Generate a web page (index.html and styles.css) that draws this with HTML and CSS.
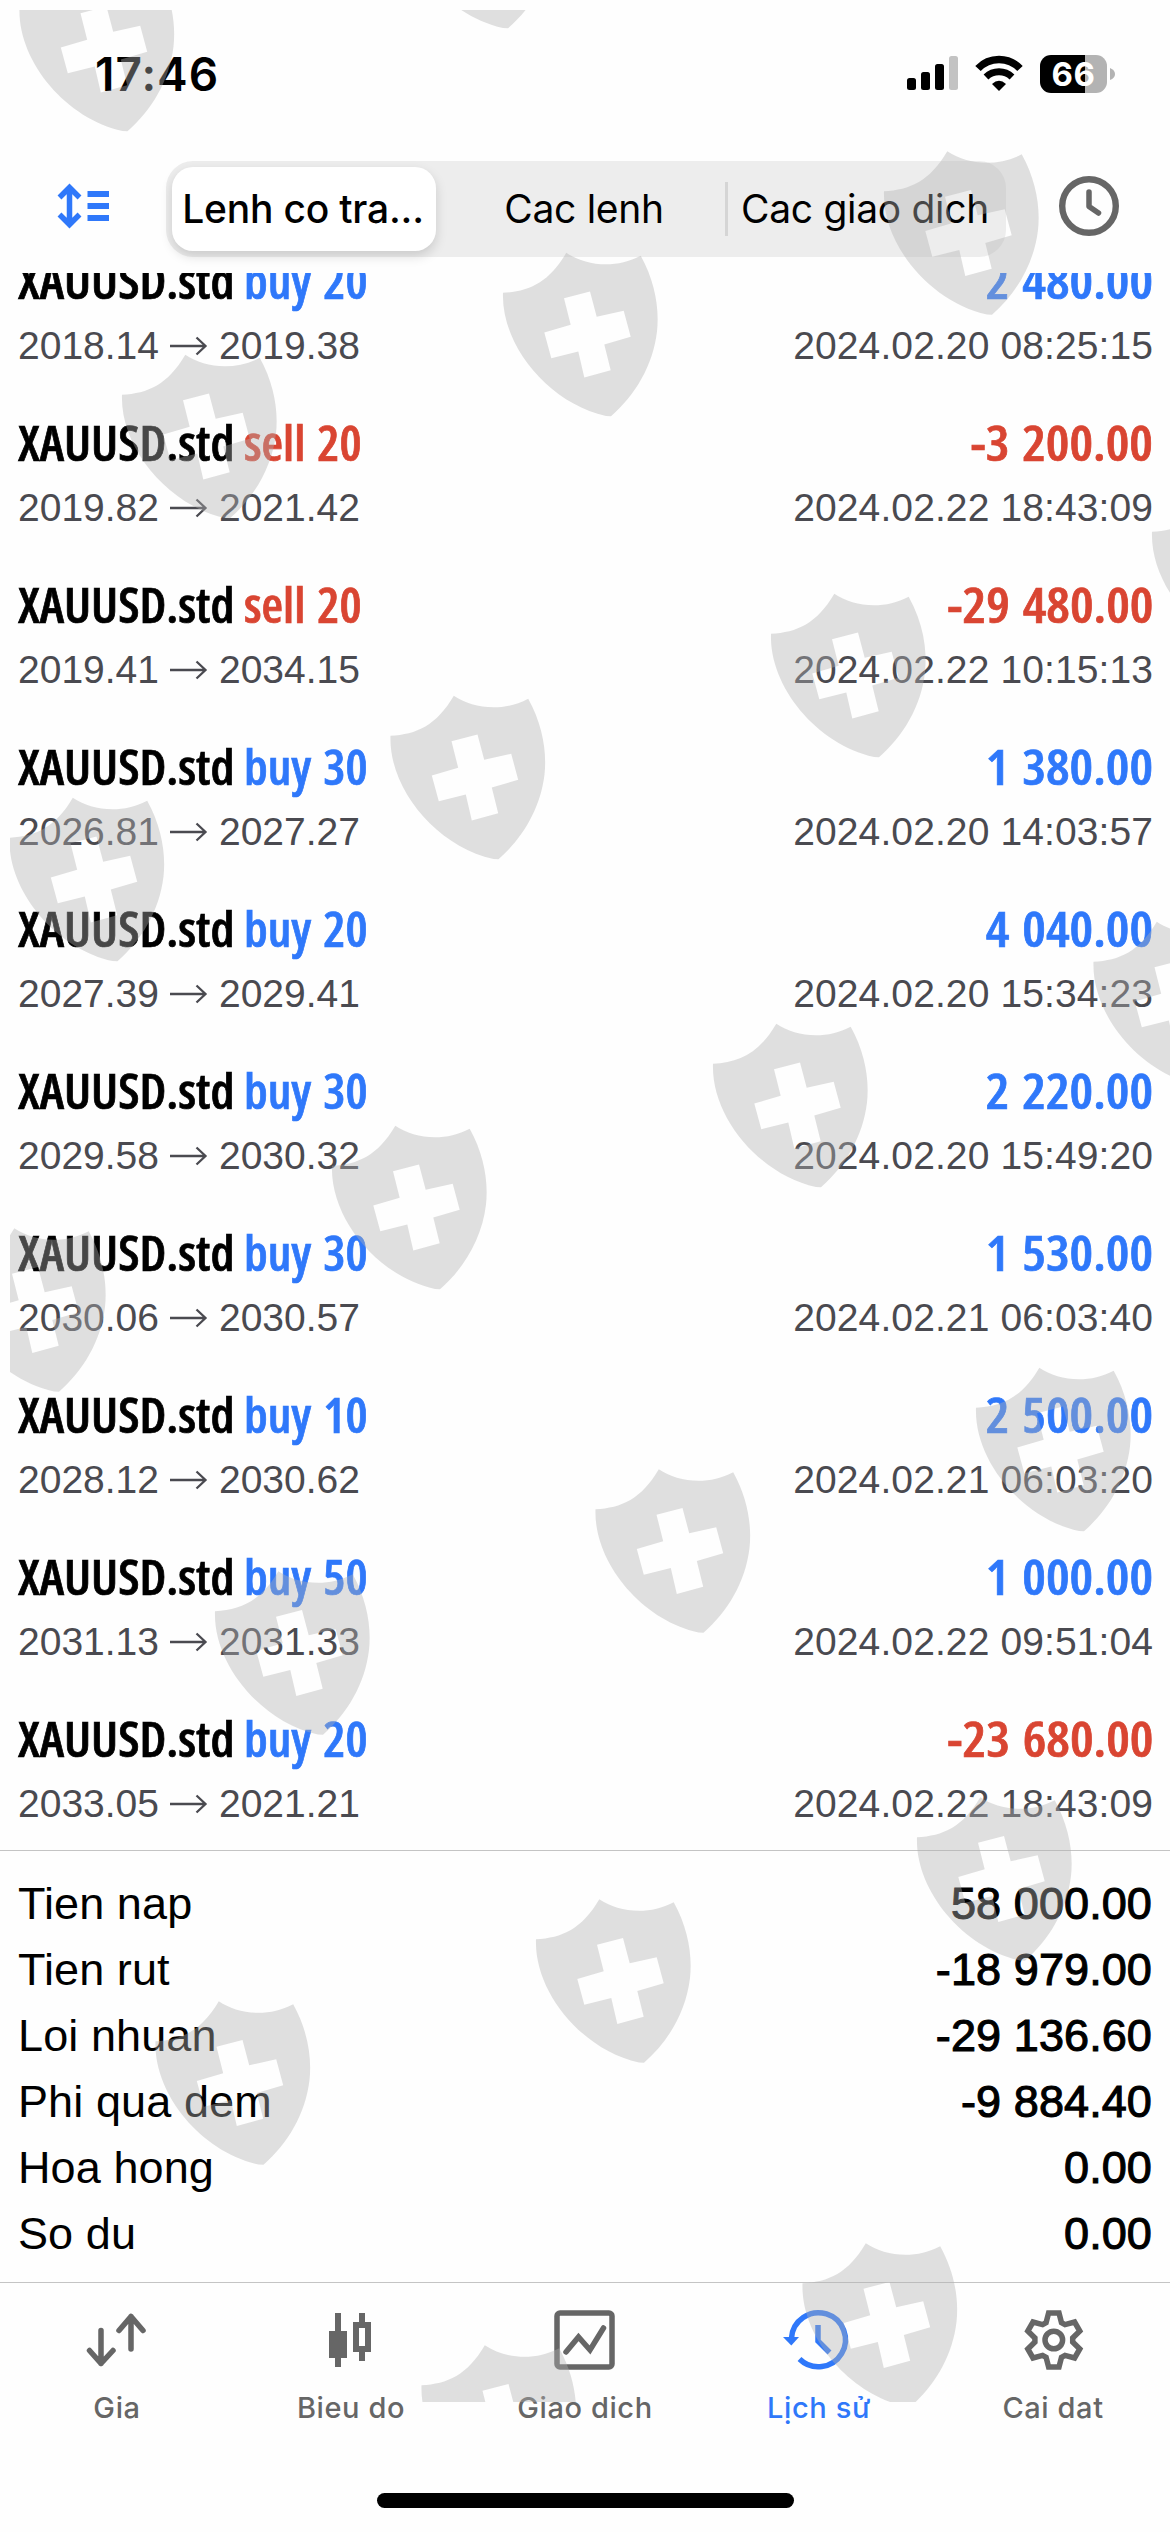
FILE: index.html
```html
<!DOCTYPE html>
<html lang="vi">
<head>
<meta charset="utf-8">
<title>Lịch sử</title>
<link rel="stylesheet" href="styles.css">
</head>
<body>
<div class="screen">
  <header class="status">
    <div class="time">17:46</div>
    <div class="indicators">
      <svg class="signal" viewBox="0 0 51 36"><rect y="23" width="9" height="12" rx="2.5"/><rect x="14" y="17" width="9" height="18" rx="2.5"/><rect x="28" y="9" width="9" height="26" rx="2.5"/><rect x="42" y="1" width="9" height="34" rx="2.5" fill="#c3c3c3"/></svg>
      <svg class="wifi" viewBox="0 0 48 36"><g fill="none" stroke="#000"><path d="M3 13.5A29 29 0 0 1 45 13.5" stroke-width="7.5"/><path d="M11 22A19 19 0 0 1 37 22" stroke-width="7"/></g><path d="M17 29Q24 22.5 31 29L24 36Z"/></svg>
      <div class="battery"><div class="level">66</div><svg class="nub" viewBox="0 0 5 12"><path d="M0 0Q5 2 5 6Q5 10 0 12Z" fill="#b3b3b3"/></svg></div>
    </div>
  </header>

  <nav class="toolbar">
    <svg class="sort" viewBox="0 0 52 46" fill="none" stroke="#2f78fa"><path d="M12.5 4V42M2.5 14.5L12.5 4.5L22.5 14.5M2.5 31.5L12.5 41.5L22.5 31.5" stroke-width="5.5"/><path d="M30.500 11H52M30.500 23H52M30.500 35H52" stroke-width="6"/></svg>
    <div class="segments">
      <div class="segment selected">Lenh co tra...</div>
      <div class="segment">Cac lenh</div>
      <div class="segment last">Cac giao dich</div>
    </div>
    <svg class="clock" viewBox="0 0 60 60" fill="none" stroke="#666"><circle cx="30" cy="30" r="26.800" stroke-width="6.400"/><path d="M30 16V30.500L39.500 37" stroke-width="5.500" stroke-linecap="round" stroke-linejoin="round"/></svg>
  </nav>

  <main class="deals">
    <article class="deal buy up"><div class="line"><span class="symbol">XAUUSD.std</span><span class="side">buy 20</span><span class="amount">2 480.00</span></div><div class="detail"><span>2018.14</span><svg class="arrow" viewBox="0 0 39 20"><path d="M1 10H36.500M27.500 1.500L36.500 10L27.500 18.500"/></svg><span>2019.38</span><time>2024.02.20 08:25:15</time></div></article>
    <article class="deal sell down"><div class="line"><span class="symbol">XAUUSD.std</span><span class="side">sell 20</span><span class="amount">-3 200.00</span></div><div class="detail"><span>2019.82</span><svg class="arrow" viewBox="0 0 39 20"><path d="M1 10H36.500M27.500 1.500L36.500 10L27.500 18.500"/></svg><span>2021.42</span><time>2024.02.22 18:43:09</time></div></article>
    <article class="deal sell down"><div class="line"><span class="symbol">XAUUSD.std</span><span class="side">sell 20</span><span class="amount">-29 480.00</span></div><div class="detail"><span>2019.41</span><svg class="arrow" viewBox="0 0 39 20"><path d="M1 10H36.500M27.500 1.500L36.500 10L27.500 18.500"/></svg><span>2034.15</span><time>2024.02.22 10:15:13</time></div></article>
    <article class="deal buy up"><div class="line"><span class="symbol">XAUUSD.std</span><span class="side">buy 30</span><span class="amount">1 380.00</span></div><div class="detail"><span>2026.81</span><svg class="arrow" viewBox="0 0 39 20"><path d="M1 10H36.500M27.500 1.500L36.500 10L27.500 18.500"/></svg><span>2027.27</span><time>2024.02.20 14:03:57</time></div></article>
    <article class="deal buy up"><div class="line"><span class="symbol">XAUUSD.std</span><span class="side">buy 20</span><span class="amount">4 040.00</span></div><div class="detail"><span>2027.39</span><svg class="arrow" viewBox="0 0 39 20"><path d="M1 10H36.500M27.500 1.500L36.500 10L27.500 18.500"/></svg><span>2029.41</span><time>2024.02.20 15:34:23</time></div></article>
    <article class="deal buy up"><div class="line"><span class="symbol">XAUUSD.std</span><span class="side">buy 30</span><span class="amount">2 220.00</span></div><div class="detail"><span>2029.58</span><svg class="arrow" viewBox="0 0 39 20"><path d="M1 10H36.500M27.500 1.500L36.500 10L27.500 18.500"/></svg><span>2030.32</span><time>2024.02.20 15:49:20</time></div></article>
    <article class="deal buy up"><div class="line"><span class="symbol">XAUUSD.std</span><span class="side">buy 30</span><span class="amount">1 530.00</span></div><div class="detail"><span>2030.06</span><svg class="arrow" viewBox="0 0 39 20"><path d="M1 10H36.500M27.500 1.500L36.500 10L27.500 18.500"/></svg><span>2030.57</span><time>2024.02.21 06:03:40</time></div></article>
    <article class="deal buy up"><div class="line"><span class="symbol">XAUUSD.std</span><span class="side">buy 10</span><span class="amount">2 500.00</span></div><div class="detail"><span>2028.12</span><svg class="arrow" viewBox="0 0 39 20"><path d="M1 10H36.500M27.500 1.500L36.500 10L27.500 18.500"/></svg><span>2030.62</span><time>2024.02.21 06:03:20</time></div></article>
    <article class="deal buy up"><div class="line"><span class="symbol">XAUUSD.std</span><span class="side">buy 50</span><span class="amount">1 000.00</span></div><div class="detail"><span>2031.13</span><svg class="arrow" viewBox="0 0 39 20"><path d="M1 10H36.500M27.500 1.500L36.500 10L27.500 18.500"/></svg><span>2031.33</span><time>2024.02.22 09:51:04</time></div></article>
    <article class="deal buy down"><div class="line"><span class="symbol">XAUUSD.std</span><span class="side">buy 20</span><span class="amount">-23 680.00</span></div><div class="detail"><span>2033.05</span><svg class="arrow" viewBox="0 0 39 20"><path d="M1 10H36.500M27.500 1.500L36.500 10L27.500 18.500"/></svg><span>2021.21</span><time>2024.02.22 18:43:09</time></div></article>
  </main>

  <section class="summary">
    <div class="total"><span>Tien nap</span><b>58 000.00</b></div>
    <div class="total"><span>Tien rut</span><b>-18 979.00</b></div>
    <div class="total"><span>Loi nhuan</span><b>-29 136.60</b></div>
    <div class="total"><span>Phi qua dem</span><b>-9 884.40</b></div>
    <div class="total"><span>Hoa hong</span><b>0.00</b></div>
    <div class="total"><span>So du</span><b>0.00</b></div>
  </section>

  <footer class="tabs">
    <div class="tab"><svg viewBox="0 0 60 60" fill="none" stroke="currentColor" stroke-width="5.500" stroke-linecap="round" stroke-linejoin="round"><path d="M14 20.500V53.500M2.500 40.500L14 53.500L26 40.500M44 39V6.500M32 20.500L44 6.500L56 20.500"/></svg><span>Gia</span></div>
    <div class="tab"><svg viewBox="0 0 60 60" fill="currentColor"><path d="M14 3H20V21H26V48H20V57H14V48H8V21H14ZM38 3H44V12H50V42H44V51H38V42H32V12H38ZM38 18V36H44V18Z" fill-rule="evenodd"/></svg><span>Bieu do</span></div>
    <div class="tab"><svg viewBox="0 0 60 60" fill="none" stroke="currentColor" stroke-width="5.500"><rect x="2" y="3" width="55" height="54" rx="3"/><path d="M11 42L23.500 27L35 40L48.500 18" stroke-linecap="round"/></svg><span>Giao dich</span></div>
    <div class="tab active"><svg viewBox="0 0 60 60" fill="none" stroke="currentColor" stroke-width="5.500"><path d="M2.500 28A27 27 0 1 1 10.500 49M29 15V31L40.500 42.500"/><path d="M-6 27H10L2.300 35.500Z" fill="currentColor" stroke="none"/></svg><span>Lịch sử</span></div>
    <div class="tab"><svg viewBox="-30.800 -30 60 60" fill="none" stroke="currentColor" stroke-width="5.500"><circle r="8.800"/><path d="M-7.700-17.400L-5.200-27H5.200L7.700-17.400L11.200-15.400L20.800-18L26-9L18.900-2V2L26 9L20.800 18L11.200 15.400L7.700 17.400L5.200 27H-5.200L-7.700 17.400L-11.200 15.400L-20.800 18L-26 9L-18.900 2V-2L-26-9L-20.800-18L-11.200-15.400Z"/></svg><span>Cai dat</span></div>
  </footer>
  <div class="home"></div>

  <svg class="watermark" viewBox="0 0 1170 2532">
    <defs>
      <path id="shield" fill-rule="evenodd" d="M16 59.300C42 58 62 49 79.300 19.300C98 32 128 36 153.700 22.300C168 48 172.500 75 170 98C166 132 148 162 124 182.700L119 182.500C62 170 14 112 16 59.300ZM77 64.700L83.700 91.300L57.300 99L64.300 124.700L91.300 118L97.300 144L123.700 136.700L117.300 111L143.700 103.300L136.700 77.300L109.700 83.300L103 58Z"/>
      <clipPath id="area"><rect x="10" y="10" width="1160" height="2392"/></clipPath>
    </defs>
    <g clip-path="url(#area)" fill="#b2b2b2" fill-opacity=".4">
      <use href="#shield" x="3.500" y="-51.500"/><use href="#shield" x="384" y="-154.500"/>
      <use href="#shield" x="868" y="132"/><use href="#shield" x="487" y="233.500"/><use href="#shield" x="106" y="335.500"/>
      <use href="#shield" x="1136" y="472.500"/><use href="#shield" x="755" y="574.500"/><use href="#shield" x="374.500" y="676.500"/><use href="#shield" x="-6.500" y="778.500"/>
      <use href="#shield" x="1077.500" y="902.500"/><use href="#shield" x="697" y="1004.500"/><use href="#shield" x="316" y="1106.500"/><use href="#shield" x="-65" y="1209"/>
      <use href="#shield" x="960" y="1348.500"/><use href="#shield" x="579.500" y="1450"/><use href="#shield" x="199" y="1552"/>
      <use href="#shield" x="901" y="1778"/><use href="#shield" x="520" y="1880"/><use href="#shield" x="139.500" y="1982"/>
      <use href="#shield" x="786.500" y="2224"/><use href="#shield" x="405.500" y="2326"/>
    </g>
  </svg>
</div>
</body>
</html>
```
FILE: styles.css
```css
* { box-sizing: border-box; }
body { margin: 0; background: #fefefe; color: #000; font-family: "Liberation Sans", Arial, sans-serif; }
svg { display: block; overflow: visible; flex: none; }
.screen { position: relative; width: 1170px; height: 2532px; display: flex; flex-direction: column; overflow: hidden; }

.status { height: 161px; flex: none; display: flex; justify-content: space-between; align-items: flex-start; padding: 55px 55px 0 95px; }
.time { font: 600 46px/39px Inter, sans-serif; letter-spacing: 1px; }
.indicators { display: flex; gap: 17px; }
.signal { width: 51px; height: 36px; }
.wifi { width: 48px; height: 36px; }
.battery { display: flex; align-items: center; gap: 3px; }
.level { width: 67px; height: 38px; border-radius: 11px; background: linear-gradient(90deg, #000 45px, #b3b3b3 45px); color: #fff; font: 700 33px/38px Inter, sans-serif; text-align: center; letter-spacing: .5px; }
.nub { width: 5px; height: 12px; }

.toolbar { height: 112px; flex: none; display: flex; align-items: flex-start; padding: 0 51px 0 57px; }
.sort { width: 52px; height: 46px; margin: 22px 57px 0 0; }
.segments { width: 840px; height: 96px; flex: none; display: grid; grid-template-columns: repeat(3, 1fr); align-items: center; background: #ededed; border-radius: 27px; padding-bottom: 1px; }
.segment { height: 54px; font: 400 39px/54px Inter, sans-serif; letter-spacing: -.3px; text-align: center; white-space: nowrap; padding-right: 4px; }
.segment.selected { height: 84px; line-height: 84px; margin: 0 10px 0 6px; padding-right: 2px; font-weight: 500; background: #fff; border-radius: 21px; box-shadow: 0 5px 12px rgba(0, 0, 0, .15); letter-spacing: -.2px; }
.segment.last { border-left: 3px solid #d5d5d5; margin-left: -1px; }
.clock { width: 60px; height: 60px; margin: 15px 0 0 53px; }

.deals { height: 1577px; flex: none; display: flex; flex-direction: column; justify-content: flex-end; overflow: hidden; }
.deal { height: 162px; flex: none; padding: 18px 17px 0 18px; }
.line { height: 66px; display: flex; font: 600 48px/66px "Open Sans", sans-serif; font-stretch: 75%; white-space: nowrap; -webkit-text-stroke: .7px currentColor; }
.symbol { width: 226px; transform: scaleX(1.045); transform-origin: left; }
.side { word-spacing: 3px; transform: scaleX(1.03); transform-origin: left; }
.amount { margin-left: auto; word-spacing: 3px; transform: scaleX(1.1); transform-origin: right; }
.buy .side, .up .amount { color: #2f78fa; }
.sell .side, .down .amount { color: #d94532; }
.detail { height: 44px; margin-top: 10px; display: flex; align-items: center; gap: 10.5px; font-size: 39px; line-height: 44px; color: #4a4a50; }
.detail time { margin-left: auto; letter-spacing: .1px; }
.arrow { width: 39px; height: 20px; fill: none; stroke: #4a4a50; stroke-width: 2.3px; }

.summary { height: 432px; flex: none; border-top: 1.5px solid #c4c4c4; padding: 20px 18px 0; }
.total { height: 66px; display: flex; justify-content: space-between; font-size: 45px; line-height: 66px; letter-spacing: .1px; }
.total b { font-weight: 400; -webkit-text-stroke: 1.1px #000; }

.tabs { height: 211px; flex: none; border-top: 1.5px solid #c4c4c4; display: grid; grid-template-columns: repeat(5, 1fr); color: #666; }
.tab { display: flex; flex-direction: column; align-items: center; padding-top: 27px; }
.tab svg { width: 60px; height: 60px; }
.tab span { font: 450 29px/40px Inter, sans-serif; margin-top: 18px; letter-spacing: .6px; }
.tab.active { color: #2f78fa; }
.home { width: 417px; height: 15px; flex: none; margin: 0 auto; border-radius: 8px; background: #000; }
.watermark { position: absolute; left: 0; top: 0; width: 1170px; height: 2532px; pointer-events: none; }
```
